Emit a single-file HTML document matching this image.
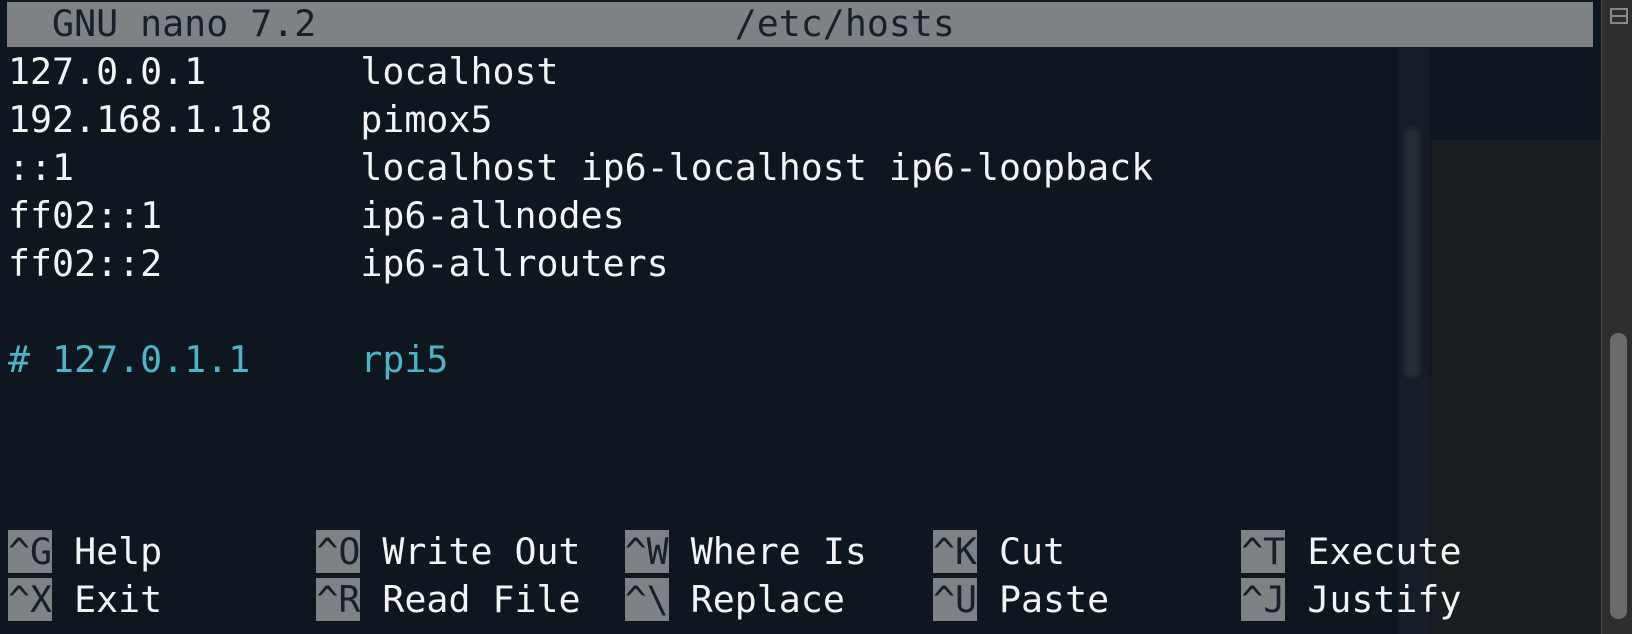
<!DOCTYPE html>
<html><head><meta charset="utf-8"><style>
html,body{margin:0;padding:0;}
body{width:1632px;height:634px;overflow:hidden;background:#0e1620;position:relative;font-family:"DejaVu Sans Mono","Liberation Mono",monospace;font-size:36.6px;color:#f2f4f5;}
.r{position:absolute;left:8px;height:48px;line-height:48px;white-space:pre;}
.hdr{position:absolute;left:7px;top:2px;width:1586px;height:45px;background:#7f8285;}
.k{background:#7f8285;color:#15202a;}
.c{color:#4db3c6;}
.strip{position:absolute;left:1601px;top:0;width:31px;height:634px;background:#2f2e2d;border-left:1px solid #4a4a48;}
.thumb{position:absolute;left:1610px;top:333px;width:17px;height:286px;background:#6a6a6a;border-radius:8px;}
.ico{position:absolute;left:1610px;top:8px;width:14px;height:12px;border:2px solid #888;}
.ico:after{content:"";position:absolute;left:0;top:5px;width:14px;height:2px;background:#888;}
.panel{position:absolute;left:1431px;top:140px;width:170px;height:494px;background:#191c21;}
.band{position:absolute;left:1398px;top:48px;width:32px;height:586px;background:#161d26;}
.sb{position:absolute;left:1404px;top:128px;width:16px;height:250px;background:#262c34;border-radius:8px;filter:blur(2px);}
</style></head><body>
<div class="band"></div>
<div class="panel"></div>
<div class="sb"></div>
<div class="hdr"></div>
<div class="r" style="top:0;color:#15202a">  GNU nano 7.2                   /etc/hosts</div>
<div class="r" style="top:48px">127.0.0.1       localhost</div>
<div class="r" style="top:96px">192.168.1.18    pimox5</div>
<div class="r" style="top:144px">::1             localhost ip6-localhost ip6-loopback</div>
<div class="r" style="top:192px">ff02::1         ip6-allnodes</div>
<div class="r" style="top:240px">ff02::2         ip6-allrouters</div>
<div class="r c" style="top:336px"># 127.0.1.1     rpi5</div>
<div class="r" style="top:528px"><span class="k">^G</span> Help       <span class="k">^O</span> Write Out  <span class="k">^W</span> Where Is   <span class="k">^K</span> Cut        <span class="k">^T</span> Execute</div>
<div class="r" style="top:576px"><span class="k">^X</span> Exit       <span class="k">^R</span> Read File  <span class="k">^\</span> Replace    <span class="k">^U</span> Paste      <span class="k">^J</span> Justify</div>
<div class="strip"></div>
<div class="ico"></div>
<div class="thumb"></div>
</body></html>
